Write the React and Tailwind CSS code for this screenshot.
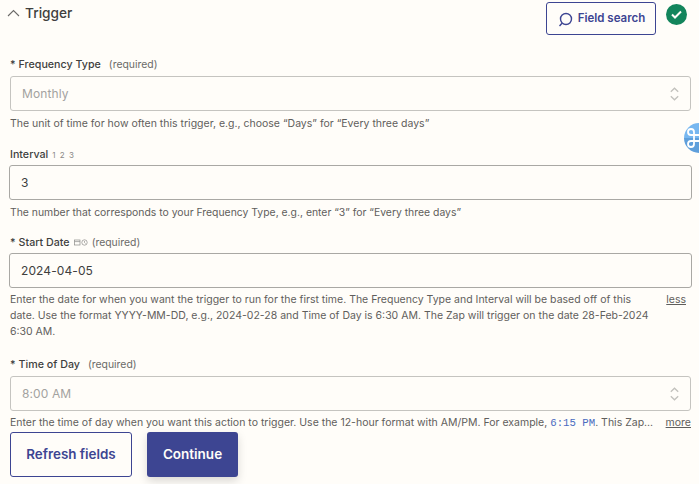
import React from 'react';

const Chevrons = () => (
    <svg width="9" height="14" viewBox="0 0 9 14" fill="none" stroke="#c2c1bd" strokeWidth="1.3">
        <path d="M0.8 4.8 4.5 1.2l3.7 3.6" />
        <path d="M0.8 9.2l3.7 3.6 3.7-3.6" />
    </svg>
);

const Field = ({ label, hint, value, disabled, select, children, gap = 'mt-[2px]' }) => (
    <div>
        <div className="flex items-center h-[18px] pt-[2px] text-[10.7px] text-[#403f3e]">{label}{hint}</div>
        <div className={`${gap} flex items-center justify-between h-[35px] rounded-[3px] border pl-[11px] pr-[11px] text-[12px] tracking-[0.1px] ${disabled ? 'border-[#c5c4c0] text-[#a3a2a0]' : '-mx-[1px] border-[#a9a8a4] text-[#403f3e]'}`}>
            <span>{value}</span>
            {select && <Chevrons />}
        </div>
        {children}
    </div>
);

const App = () => {
    return (
        <div className="relative w-[699px] h-[484px] overflow-hidden bg-[#fffdf9] font-['Inter',sans-serif]">
            <div className="flex items-start justify-between pl-[7px] pr-[12px] pt-[2px]">
                <div className="flex items-center gap-[5px] h-[22px]">
                    <svg width="13" height="8" viewBox="0 0 13 8" fill="none" stroke="#6b6a68" strokeWidth="1.1">
                        <path d="M1 7l5.5-5.5L12 7" />
                    </svg>
                    <span className="text-[13.7px] font-medium text-[#403f3e]">Trigger</span>
                </div>
                <div className="flex items-start gap-[10px]">
                    <button className="flex items-center justify-center gap-[5px] w-[110px] h-[33px] rounded-[3px] border border-[#3d4592] text-[11.5px] font-semibold text-[#3d4592]">
                        <svg width="16" height="16" viewBox="0 0 16 16" fill="none" stroke="#3d4592" strokeWidth="1.4">
                            <circle cx="9" cy="8" r="5.5" />
                            <path d="M5 12.2 2.5 15" />
                        </svg>
                        Field search
                    </button>
                    <div className="flex items-center justify-center w-[21px] h-[21px] mt-[2px] rounded-full bg-[#13855c]">
                        <svg width="11" height="9" viewBox="0 0 11 9" fill="none" stroke="#fffdf9" strokeWidth="2">
                            <path d="M1 4.5 4 7.5 10 1.5" />
                        </svg>
                    </div>
                </div>
            </div>

            <div className="pl-[10px] pr-[8px] mt-[20px]">
                <Field
                    disabled
                    select
                    gap="mt-[3px]"
                    value="Monthly"
                    label={<span className="font-medium"><span className="mr-[3px]">*</span>Frequency Type</span>}
                    hint={<span className="ml-[8px] text-[10.4px] text-[#6b6a68]">(required)</span>}
                >
                    <p className="mt-[5px] text-[10.5px] leading-[16px] text-[#5f5e5c]">The unit of time for how often this trigger, e.g., choose “Days” for “Every three days”</p>
                </Field>

                <div className="mt-[13px]">
                    <Field
                        value="3"
                        label={<span className="font-medium">Interval</span>}
                        hint={<span className="ml-[4px] text-[8px] text-[#8b8a88] tracking-[1px]">1 2 3</span>}
                    >
                        <p className="mt-[5px] text-[10.4px] leading-[16px] text-[#5f5e5c]">The number that corresponds to your Frequency Type, e.g., enter “3” for “Every three days”</p>
                    </Field>
                </div>

                <div className="mt-[12px]">
                    <Field
                        value="2024-04-05"
                        label={<span className="font-medium"><span className="mr-[3px]">*</span>Start Date</span>}
                        hint={
                            <span className="flex items-center ml-[4px] gap-[1px] text-[10.4px] text-[#6b6a68]">
                                <svg width="14" height="7" viewBox="0 0 14 7" fill="none" stroke="#8b8a88" strokeWidth="0.7">
                                    <rect x="0.5" y="1" width="5.5" height="5" />
                                    <path d="M0.5 2.6h5.5" />
                                    <circle cx="10.5" cy="3.5" r="2.7" />
                                    <path d="M10.5 2v1.5l1 1" />
                                </svg>
                                <span className="ml-[3px]">(required)</span>
                            </span>
                        }
                    >
                        <div className="flex justify-between mt-[4px] text-[10.5px] leading-[16px] text-[#5f5e5c]">
                            <p className="w-[640px]">Enter the date for when you want the trigger to run for the first time. The Frequency Type and Interval will be based off of this date. Use the format YYYY-MM-DD, e.g., 2024-02-28 and Time of Day is 6:30 AM. The Zap will trigger on the date 28-Feb-2024 6:30 AM.</p>
                            <span className="underline mr-[5px]">less</span>
                        </div>
                    </Field>
                </div>

                <div className="mt-[15px]">
                    <Field
                        disabled
                        select
                        gap="mt-[3px]"
                        value="8:00 AM"
                        label={<span className="font-medium"><span className="mr-[3px]">*</span>Time of Day</span>}
                        hint={<span className="ml-[8px] text-[10.4px] text-[#6b6a68]">(required)</span>}
                    >
                        <div className="flex justify-between mt-[4px] text-[10.5px] leading-[16px] text-[#5f5e5c]">
                            <p className="whitespace-nowrap">Enter the time of day when you want this action to trigger. Use the 12-hour format with AM/PM. For example, <code className="font-['Liberation_Mono',monospace] font-normal text-[10.7px] text-[#4a6bc0]">6:15 PM</code>. This Zap...</p>
                            <span className="underline">more</span>
                        </div>
                    </Field>
                </div>

                <div className="flex gap-[15px] mt-[1px]">
                    <button className="w-[122px] h-[45px] rounded-[3px] border border-[#3d4592] text-[13.4px] font-semibold text-[#3d4592]">Refresh fields</button>
                    <button className="w-[91px] h-[45px] rounded-[3px] bg-[#3d4592] text-[13.5px] font-semibold text-[#fffdf9] shadow-[0_4px_10px_rgba(0,0,0,0.15)]">Continue</button>
                </div>
            </div>

            {/* floating helper badge on the right edge */}
            <div className="absolute left-[684px] top-[123px] w-[30px] h-[30px] rounded-full overflow-hidden bg-[linear-gradient(#77b7f0_50%,#5f9fdb_50%)]">
                <svg width="30" height="30" viewBox="0 0 30 30" fill="none" stroke="#ffffff" strokeWidth="1.8">
                    <g transform="translate(-2 0)">
                        <path d="M12 12h6v6h-6z" />
                        <path d="M12 12H9a3 3 0 1 1 3-3zM18 12V9a3 3 0 1 1 3 3zM12 18v3a3 3 0 1 1-3-3zM18 18h3a3 3 0 1 1-3 3z" />
                    </g>
                </svg>
            </div>
        </div>
    );
};

export default App;
